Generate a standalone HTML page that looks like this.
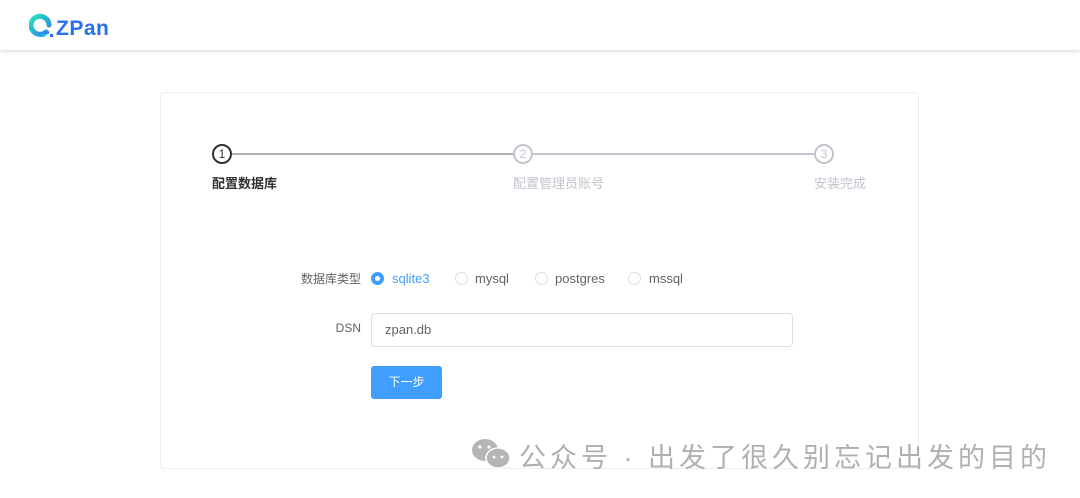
<!DOCTYPE html>
<html><head><meta charset="utf-8"><style>
*{box-sizing:border-box;margin:0;padding:0}
body{width:1080px;height:498px;background:#fff;font-family:"Liberation Sans","Noto Sans CJK SC",sans-serif;position:relative;overflow:hidden}
.hdr{position:absolute;left:0;top:0;width:1080px;height:50px;background:#fff;box-shadow:0 2px 4px rgba(0,0,0,.12)}
.logo{position:absolute;left:56px;top:17px;font-size:21px;font-weight:bold;color:#2a6ff0;letter-spacing:0.5px}
.card{position:absolute;left:160px;top:92px;width:759px;height:377px;border:1px solid #ebeef5;border-radius:4px}
.ab{position:absolute}
.circ{width:20px;height:20px;border-radius:50%;border:2px solid #c0c4cc;color:#c0c4cc;font-size:12px;text-align:center;line-height:16px;background:#fff}
.line{height:2px;background:#c0c4cc}
.st{font-size:13px;color:#c0c4cc}
.lbl{font-size:12px;color:#606266;text-align:right;width:100px}
.rad{width:13px;height:13px;border-radius:50%;border:1px solid #dcdfe6}
.rt{font-size:13px;color:#606266}
</style></head><body>
<div class="hdr">
<svg class="ab" style="left:29px;top:13px" width="28" height="26" viewBox="0 0 28 26">
<defs><linearGradient id="g" x1="0" y1="0" x2="1" y2="1"><stop offset="0" stop-color="#2ce3b5"/><stop offset="1" stop-color="#2a7cf0"/></linearGradient></defs>
<path d="M17 19 A9 9 0 1 1 20 12" fill="none" stroke="url(#g)" stroke-width="5" stroke-linecap="round"/>
<rect x="17" y="18" width="3" height="3" fill="#2a8ff0"/><rect x="21" y="21" width="3" height="3" fill="#2a6ff0"/><rect x="13" y="21" width="3" height="3" fill="#2ac0e0"/>
</svg>
<div class="logo">ZPan</div>
</div>
<div class="card"></div>
<div class="ab line" style="left:232px;top:153px;width:281px;background:#b0b3ba"></div>
<div class="ab line" style="left:533px;top:153px;width:281px"></div>
<div class="ab circ" style="left:212px;top:144px;border-color:#303133;color:#303133">1</div>
<div class="ab circ" style="left:513px;top:144px">2</div>
<div class="ab circ" style="left:814px;top:144px">3</div>
<div class="ab" style="left:212px;top:173px;font-size:13px;font-weight:bold;color:#303133">配置数据库</div>
<div class="ab st" style="left:513px;top:173px">配置管理员账号</div>
<div class="ab st" style="left:814px;top:173px">安装完成</div>
<div class="ab lbl" style="left:261px;top:270px">数据库类型</div>
<div class="ab rad" style="left:371px;top:272px;border:4px solid #409eff;background:#fff"></div>
<div class="ab rt" style="left:392px;top:271px;color:#409eff">sqlite3</div>
<div class="ab rad" style="left:455px;top:272px"></div>
<div class="ab rt" style="left:475px;top:271px">mysql</div>
<div class="ab rad" style="left:535px;top:272px"></div>
<div class="ab rt" style="left:555px;top:271px">postgres</div>
<div class="ab rad" style="left:628px;top:272px"></div>
<div class="ab rt" style="left:649px;top:271px">mssql</div>
<div class="ab lbl" style="left:261px;top:321px">DSN</div>
<div class="ab" style="left:371px;top:313px;width:422px;height:34px;border:1px solid #dcdfe6;border-radius:4px;font-size:13px;color:#606266;padding:8px 0 0 13px">zpan.db</div>
<div class="ab" style="left:371px;top:366px;width:71px;height:33px;background:#409eff;border-radius:3px;color:#fff;font-size:12px;text-align:center;line-height:33px">下一步</div>
<svg class="ab" style="left:470px;top:437px" width="42" height="34" viewBox="0 0 42 34">
<ellipse cx="15" cy="13" rx="13" ry="11" fill="#b5b5b5"/><ellipse cx="28" cy="21" rx="12" ry="10" fill="#b5b5b5" stroke="#fff" stroke-width="1.5"/>
<circle cx="10" cy="10" r="1.6" fill="#fff"/><circle cx="19" cy="10" r="1.6" fill="#fff"/><circle cx="24" cy="20" r="1.4" fill="#fff"/><circle cx="32" cy="20" r="1.4" fill="#fff"/></svg>
<div class="ab" style="left:519px;top:436px;font-size:27px;color:#b0b0b0;letter-spacing:4px;white-space:nowrap">公众号 · 出发了很久别忘记出发的目的</div>
</body></html>
